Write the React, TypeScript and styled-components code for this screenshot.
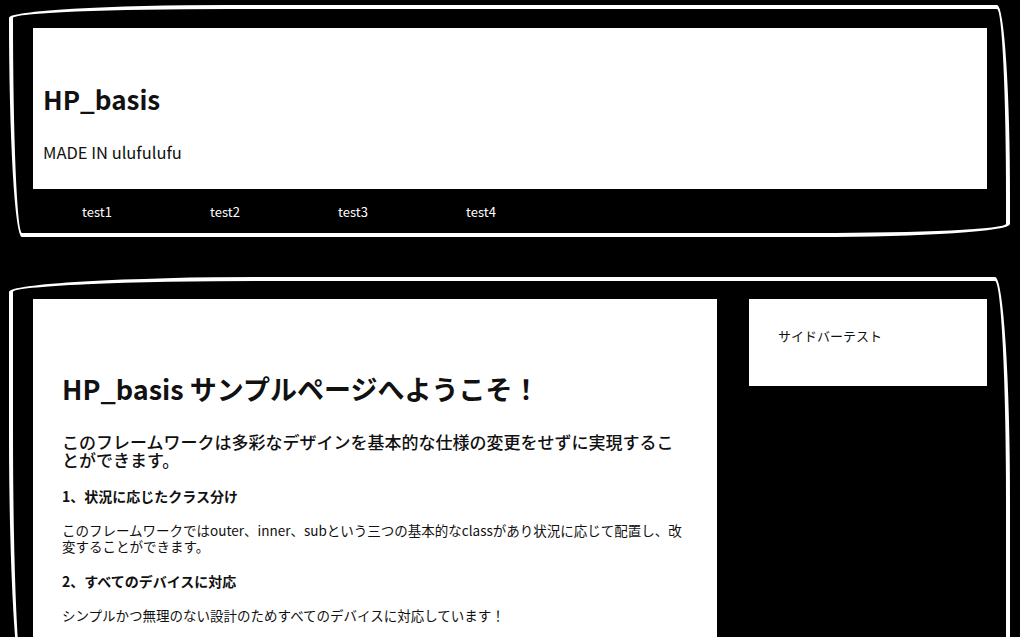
import React from 'react';
import styled, { createGlobalStyle } from 'styled-components';

const GlobalStyle = createGlobalStyle`
  html, body {
    margin: 0;
    padding: 0;
    background: #000;
  }
  body {
    font-family: "Noto Sans CJK JP", "Liberation Sans", sans-serif;
    color: #111;
  }
`;

const Page = styled.div`
  padding: 5px 10px 0 9px;
`;

// hand-drawn looking frame around each section
const Frame = styled.section<{ $gap?: number }>`
  border: 4px solid #fff;
  border-radius: 255px 15px 225px 15px / 15px 225px 15px 255px;
  margin-bottom: ${(p) => p.$gap ?? 0}px;
`;

const HeaderFrame = styled(Frame)`
  padding: 19px 19px 0 20px;
`;

const Masthead = styled.header`
  background: #fff;
  padding: 54px 10px 27px;
`;

const SiteTitle = styled.h1`
  margin: 0;
  font-size: 26px;
  line-height: 34px;
  font-weight: 700;
`;

const Tagline = styled.p`
  margin: 26px 0 0;
  font-size: 16.5px;
  line-height: 20px;
`;

const Nav = styled.nav`
  display: flex;
  height: 44px;
  align-items: center;
`;

const NavItem = styled.a`
  width: 128px;
  text-align: center;
  color: #fff;
  font-size: 13px;
  text-decoration: none;
`;

const BodyFrame = styled(Frame)`
  padding: 18px 19px 20px 20px;
  display: flex;
  align-items: flex-start;
  gap: 32px;
`;

const Main = styled.main`
  width: 684px;
  box-sizing: border-box;
  background: #fff;
  padding: 72px 29px 40px;
`;

const PageTitle = styled.h1`
  margin: 0;
  font-size: 27px;
  line-height: 36px;
  font-weight: 700;
`;

const Lead = styled.h2`
  margin: 26px 0 0;
  font-size: 17px;
  line-height: 18px;
  font-weight: 500;
`;

const Point = styled.h3`
  margin: 17px 0 0;
  font-size: 14px;
  line-height: 20px;
  font-weight: 700;
`;

const Text = styled.p`
  margin: 16px 0 0;
  font-size: 13.5px;
  line-height: 16px;
`;

const Sidebar = styled.aside`
  width: 238px;
  box-sizing: border-box;
  background: #fff;
  padding: 27px 29px 40px;
  font-size: 13px;
  line-height: 20px;
`;

const navItems = ['test1', 'test2', 'test3', 'test4'];

const App: React.FC = () => {
  return (
    <Page>
      <GlobalStyle />
      <HeaderFrame $gap={40}>
        <Masthead>
          <SiteTitle>HP_basis</SiteTitle>
          <Tagline>MADE IN ulufulufu</Tagline>
        </Masthead>
        <Nav>
          {navItems.map((item) => (
            <NavItem key={item} href="#">
              {item}
            </NavItem>
          ))}
        </Nav>
      </HeaderFrame>
      <BodyFrame>
        <Main>
          <PageTitle>HP_basis サンプルページへようこそ！</PageTitle>
          <Lead>
            このフレームワークは多彩なデザインを基本的な仕様の変更をせずに実現することができます。
          </Lead>
          <Point>1、状況に応じたクラス分け</Point>
          <Text>
            このフレームワークではouter、inner、subという三つの基本的なclassがあり状況に応じて配置し、改変することができます。
          </Text>
          <Point>2、すべてのデバイスに対応</Point>
          <Text>シンプルかつ無理のない設計のためすべてのデバイスに対応しています！</Text>
        </Main>
        <Sidebar>サイドバーテスト</Sidebar>
      </BodyFrame>
    </Page>
  );
};

export default App;
